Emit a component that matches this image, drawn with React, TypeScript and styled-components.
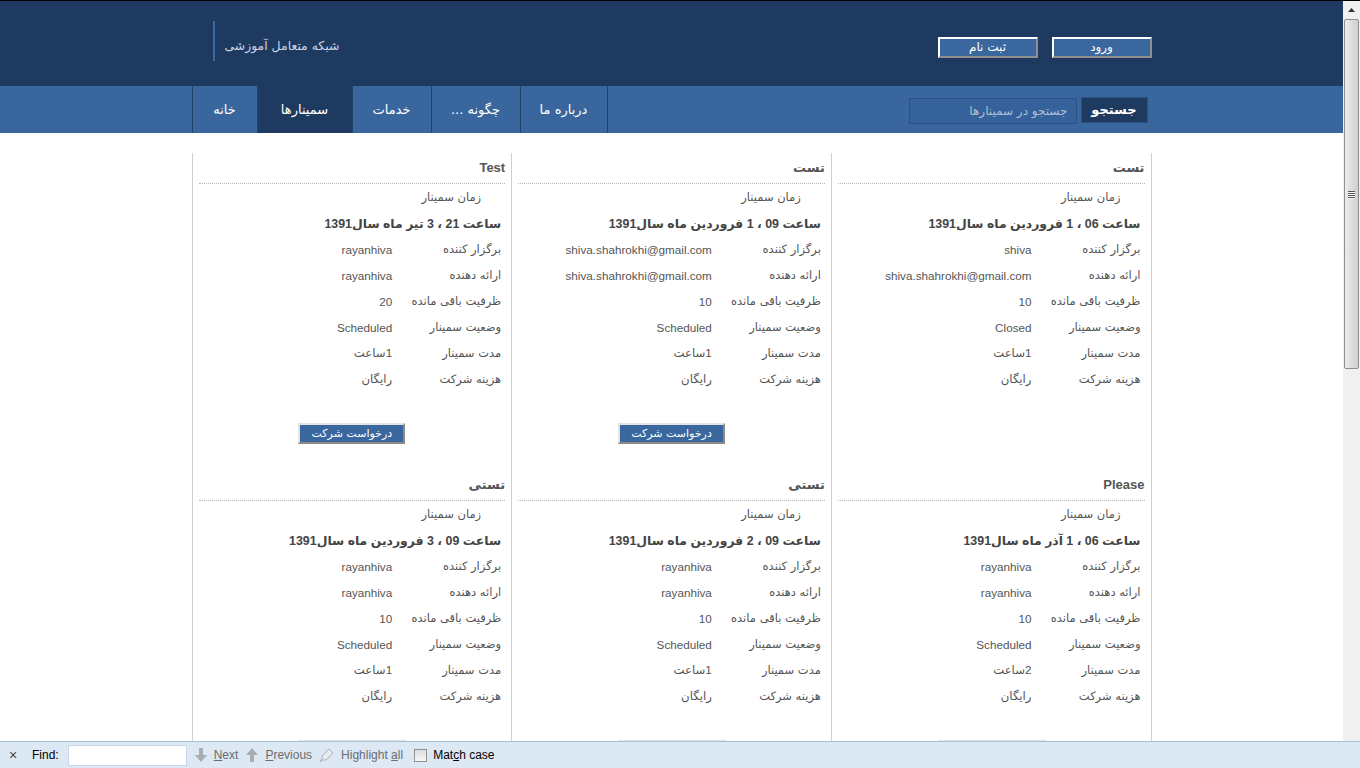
import styled, { createGlobalStyle } from "styled-components";

const GlobalStyle = createGlobalStyle`
  html, body {
    margin: 0;
    padding: 0;
    height: 100%;
    overflow: hidden;
  }
  body {
    font-family: "Liberation Sans", "DejaVu Sans", sans-serif;
    background: #fff;
  }
  #root {
    height: 100%;
  }
`;

type Seminar = {
  title: string;
  date: string;
  organizer: string;
  presenter: string;
  capacity: string;
  status: string;
  duration: string;
  cost: string;
  canJoin: boolean;
};

const seminars: Seminar[] = [
  {
    title: "تست",
    date: "ساعت 06 ، 1 فروردین ماه سال1391",
    organizer: "shiva",
    presenter: "shiva.shahrokhi@gmail.com",
    capacity: "10",
    status: "Closed",
    duration: "1ساعت",
    cost: "رایگان",
    canJoin: false,
  },
  {
    title: "تست",
    date: "ساعت 09 ، 1 فروردین ماه سال1391",
    organizer: "shiva.shahrokhi@gmail.com",
    presenter: "shiva.shahrokhi@gmail.com",
    capacity: "10",
    status: "Scheduled",
    duration: "1ساعت",
    cost: "رایگان",
    canJoin: true,
  },
  {
    title: "Test",
    date: "ساعت 21 ، 3 تیر ماه سال1391",
    organizer: "rayanhiva",
    presenter: "rayanhiva",
    capacity: "20",
    status: "Scheduled",
    duration: "1ساعت",
    cost: "رایگان",
    canJoin: true,
  },
  {
    title: "Please",
    date: "ساعت 06 ، 1 آذر ماه سال1391",
    organizer: "rayanhiva",
    presenter: "rayanhiva",
    capacity: "10",
    status: "Scheduled",
    duration: "2ساعت",
    cost: "رایگان",
    canJoin: true,
  },
  {
    title: "تستی",
    date: "ساعت 09 ، 2 فروردین ماه سال1391",
    organizer: "rayanhiva",
    presenter: "rayanhiva",
    capacity: "10",
    status: "Scheduled",
    duration: "1ساعت",
    cost: "رایگان",
    canJoin: true,
  },
  {
    title: "تستی",
    date: "ساعت 09 ، 3 فروردین ماه سال1391",
    organizer: "rayanhiva",
    presenter: "rayanhiva",
    capacity: "10",
    status: "Scheduled",
    duration: "1ساعت",
    cost: "رایگان",
    canJoin: true,
  },
];

const navItems = [
  { label: "خانه", width: 65 },
  { label: "سمینارها", width: 95, active: true },
  { label: "خدمات", width: 79 },
  { label: "چگونه ...", width: 89 },
  { label: "درباره ما", width: 87 },
];

function App() {
  return (
    <>
      <GlobalStyle />
      <Viewport>
        <Body>
          <Page>
            <Header>
              <HeaderInner>
                <Logo>شبکه متعامل آموزشی</Logo>
                <AuthButtons>
                  <HeaderButton>ثبت نام</HeaderButton>
                  <HeaderButton>ورود</HeaderButton>
                </AuthButtons>
              </HeaderInner>
            </Header>
            <NavBar>
              <NavInner>
                <NavList>
                  {navItems.map((item) => (
                    <NavItem key={item.label} $w={item.width} $active={item.active}>
                      {item.label}
                    </NavItem>
                  ))}
                </NavList>
                <SearchForm>
                  <SearchInput placeholder="جستجو در سمینارها" dir="rtl" />
                  <SearchButton type="button">جستجو</SearchButton>
                </SearchForm>
              </NavInner>
            </NavBar>
            <Main>
              <CardGrid>
                {seminars.map((s, i) => (
                  <Card key={i}>
                    <CardTitle>{s.title}</CardTitle>
                    <InfoTable>
                      <TimeLabel>زمان سمینار</TimeLabel>
                      <DateRow>{s.date}</DateRow>
                      <Label>برگزار کننده</Label>
                      <Value>{s.organizer}</Value>
                      <Label>ارائه دهنده</Label>
                      <Value>{s.presenter}</Value>
                      <Label>ظرفیت باقی مانده</Label>
                      <Value>{s.capacity}</Value>
                      <Label>وضعیت سمینار</Label>
                      <Value>{s.status}</Value>
                      <Label>مدت سمینار</Label>
                      <Value>{s.duration}</Value>
                      <Label>هزینه شرکت</Label>
                      <Value>{s.cost}</Value>
                    </InfoTable>
                    {s.canJoin && (
                      <CardActions>
                        <JoinButton>درخواست شرکت</JoinButton>
                      </CardActions>
                    )}
                  </Card>
                ))}
              </CardGrid>
            </Main>
          </Page>
          <ScrollTrack>
            <ScrollArrow>
              <svg width="7" height="4" viewBox="0 0 7 4">
                <path d="M0 4 L3.5 0 L7 4 Z" fill="#333" />
              </svg>
            </ScrollArrow>
            <ScrollThumb>
              <Grip />
              <Grip />
              <Grip />
              <Grip />
            </ScrollThumb>
          </ScrollTrack>
        </Body>
        <FindBar>
          <CloseMark>×</CloseMark>
          <FindLabel>Find:</FindLabel>
          <FindInput />
          <FindAction>
            <svg width="12" height="14" viewBox="0 0 12 14">
              <path d="M4 0 H8 V7 H12 L6 14 L0 7 H4 Z" fill="#a9adb2" />
            </svg>
            <span>
              <u>N</u>ext
            </span>
          </FindAction>
          <FindAction>
            <svg width="12" height="14" viewBox="0 0 12 14">
              <path d="M4 14 H8 V7 H12 L6 0 L0 7 H4 Z" fill="#a9adb2" />
            </svg>
            <span>
              <u>P</u>revious
            </span>
          </FindAction>
          <FindAction>
            <svg width="14" height="14" viewBox="0 0 14 14">
              <path d="M9 1 L13 5 L6 12 L2 12 L2 8 Z" fill="#e6ebf0" stroke="#a9adb2" strokeWidth="1" />
              <path d="M2 12 L0 14" stroke="#a9adb2" strokeWidth="1.5" />
            </svg>
            <span>
              Highlight <u>a</u>ll
            </span>
          </FindAction>
          <MatchCase>
            <CheckBox />
            <span>
              Mat<u>c</u>h case
            </span>
          </MatchCase>
        </FindBar>
      </Viewport>
    </>
  );
}

const Viewport = styled.div`
  display: flex;
  flex-direction: column;
  height: 100vh;
  border-top: 1px solid #000;
  box-sizing: border-box;
`;

const Body = styled.div`
  flex: 1;
  display: flex;
  min-height: 0;
`;

const Page = styled.div`
  flex: 1;
  overflow: hidden;
`;

const Header = styled.header`
  background: #1f3a60;
  height: 85px;
`;

const HeaderInner = styled.div`
  width: 960px;
  margin: 0 auto;
  display: flex;
  justify-content: space-between;
  align-items: flex-start;
`;

const Logo = styled.div`
  margin: 20px 0 0 21px;
  height: 40px;
  padding: 8px 0 0 10px;
  box-sizing: border-box;
  border-left: 2px solid #3b6aa3;
  display: flex;
  align-items: center;
  font-family: "DejaVu Sans", sans-serif;
  font-size: 12.4px;
  color: #c9d6e6;
  direction: rtl;
`;

const AuthButtons = styled.div`
  display: flex;
  gap: 14px;
  margin-top: 36px;
`;

const HeaderButton = styled.button`
  width: 100px;
  height: 21px;
  padding: 0;
  background: #3a679e;
  border: 2px solid;
  border-color: #fff #8f8f8f #8f8f8f #fff;
  color: #fff;
  font-family: "DejaVu Sans", sans-serif;
  font-size: 12px;
  line-height: 15px;
`;

const NavBar = styled.nav`
  background: #38669d;
  height: 47px;
`;

const NavInner = styled.div`
  width: 960px;
  height: 100%;
  margin: 0 auto;
  display: flex;
  justify-content: space-between;
  align-items: center;
`;

const NavList = styled.ul`
  display: flex;
  list-style: none;
  margin: 0;
  padding: 0;
  height: 100%;
  border-left: 1px solid #24436b;
`;

const NavItem = styled.li<{ $w: number; $active?: boolean }>`
  width: ${(p) => p.$w}px;
  box-sizing: border-box;
  border-right: 1px solid #24436b;
  display: flex;
  align-items: center;
  justify-content: center;
  background: ${(p) => (p.$active ? "#1f3a60" : "transparent")};
  color: #fff;
  font-family: "DejaVu Sans", sans-serif;
  font-size: 13px;
  direction: rtl;
`;

const SearchForm = styled.div`
  display: flex;
  align-items: center;
  gap: 4px;
  margin-right: 4px;
`;

const SearchInput = styled.input`
  width: 168px;
  height: 26px;
  box-sizing: border-box;
  margin-top: 2px;
  background: #35629a;
  border: 1px solid #2b5083;
  color: #fff;
  padding: 0 8px;
  font-family: "DejaVu Sans", sans-serif;
  font-size: 12px;
  outline: none;
  &::placeholder {
    color: #aebfd5;
  }
`;

const SearchButton = styled.button`
  width: 67px;
  height: 26px;
  background: #1f3a60;
  border: 1px solid #2b5083;
  color: #fff;
  font-family: "DejaVu Sans", sans-serif;
  font-size: 13px;
  font-weight: bold;
  padding: 0;
`;

const Main = styled.main`
  width: 960px;
  margin: 20px auto 0;
`;

const CardGrid = styled.div`
  display: grid;
  grid-template-columns: repeat(3, 1fr);
  direction: rtl;
  border-right: 1px solid #cfcfcf;
`;

const Card = styled.section`
  height: 317px;
  padding: 0 6px;
  border-left: 1px solid #cfcfcf;
  color: #555;
`;

const CardTitle = styled.h3`
  margin: 0;
  padding: 6px 0;
  line-height: 18px;
  font-size: 13px;
  font-weight: bold;
  color: #555;
  font-family: "Liberation Sans", "DejaVu Sans", sans-serif;
  border-bottom: 1px dotted #b8b8b8;
`;

const InfoTable = styled.div`
  display: grid;
  grid-template-columns: 109px 1fr;
  grid-auto-rows: 26px;
  align-items: center;
  padding-right: 4px;
  font-size: 11.7px;
`;

const Label = styled.div`
  font-family: "DejaVu Sans", sans-serif;
  font-size: 11.5px;
  color: #555;
  white-space: nowrap;
`;

const Value = styled.div`
  color: #555;
  white-space: nowrap;
`;

const TimeLabel = styled(Label)`
  grid-column: 1 / -1;
  padding-right: 20px;
`;

const DateRow = styled.div`
  grid-column: 1 / -1;
  font-size: 12.4px;
  font-weight: bold;
  color: #444;
  white-space: nowrap;
`;

const CardActions = styled.div`
  margin-top: 31px;
  display: flex;
  justify-content: center;
`;

const JoinButton = styled.button`
  width: 107px;
  height: 21px;
  padding: 0;
  background: #3a679e;
  border: 2px solid;
  border-color: #e4e4e4 #8a8a8a #8a8a8a #e4e4e4;
  color: #fff;
  font-family: "DejaVu Sans", sans-serif;
  font-size: 11px;
`;

const ScrollTrack = styled.div`
  width: 17px;
  background: #f0f0f0;
  display: flex;
  flex-direction: column;
  align-items: center;
`;

const ScrollArrow = styled.div`
  height: 17px;
  width: 17px;
  display: flex;
  align-items: center;
  justify-content: center;
`;

const ScrollThumb = styled.div`
  width: 15px;
  height: 350px;
  margin-top: 1px;
  box-sizing: border-box;
  border: 1px solid #8e8f8f;
  border-radius: 2px;
  background: linear-gradient(to right, #ececec, #dedede 45%, #cfcfcf);
  display: flex;
  flex-direction: column;
  align-items: center;
  justify-content: center;
  gap: 1px;
`;

const Grip = styled.div`
  width: 7px;
  height: 1px;
  background: #555;
  box-shadow: 0 1px 0 #fafafa;
`;

const FindBar = styled.div`
  height: 27px;
  box-sizing: border-box;
  background: #dce8f4;
  border-top: 1px solid #a9bfd6;
  display: flex;
  align-items: center;
  font-family: "Liberation Sans", sans-serif;
  font-size: 12px;
  color: #000;
`;

const CloseMark = styled.span`
  margin-left: 9px;
  width: 10px;
  font-size: 14px;
  color: #444;
`;

const FindLabel = styled.span`
  margin-left: 13px;
`;

const FindInput = styled.input`
  margin-left: 9px;
  width: 119px;
  height: 21px;
  box-sizing: border-box;
  border: 1px solid #c9d8e7;
  background: #fff;
  outline: none;
`;

const FindAction = styled.span`
  display: flex;
  align-items: center;
  gap: 7px;
  margin-left: 8px;
  color: #6d6d6d;

  &:first-of-type {
    margin-left: 10px;
  }
`;

const MatchCase = styled.span`
  display: flex;
  align-items: center;
  gap: 6px;
  margin-left: 11px;
  color: #000;
`;

const CheckBox = styled.span`
  width: 11px;
  height: 11px;
  border: 1px solid #8f8f8f;
  background: linear-gradient(#dedede, #f7f7f7);
`;

export default App;
